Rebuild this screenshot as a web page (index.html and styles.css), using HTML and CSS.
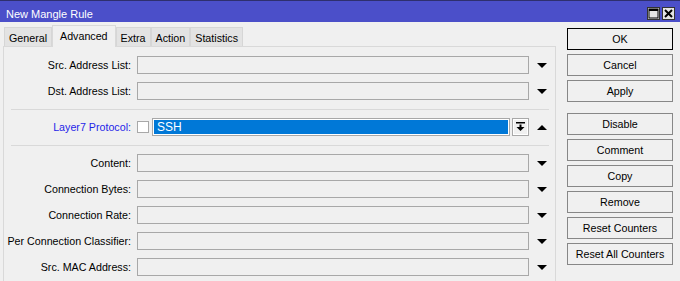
FILE: index.html
```html
<!DOCTYPE html>
<html lang="en">
<head>
	<meta charset="utf-8">
	<title>New Mangle Rule</title>
	<link rel="stylesheet" href="styles.css">
</head>
<body>
	<div class="window">
		<div class="titlebar">
			<span class="title">New Mangle Rule</span>
			<div class="wbtns">
				<span class="wbtn">
					<svg width="11" height="11" viewBox="0 0 11 11"><rect x="1" y="1" width="9" height="9" fill="none" stroke="#000" stroke-width="1"/><rect x="1" y="1" width="9" height="2" fill="#000"/></svg>
				</span>
				<span class="wbtn">
					<svg width="11" height="11" viewBox="0 0 11 11"><path d="M2 2 L9 9 M9 2 L2 9" stroke="#000" stroke-width="2"/></svg>
				</span>
			</div>
		</div>
		<div class="body">
			<div class="left">
				<div class="tabs">
					<span class="tab">General</span>
					<span class="tab active">Advanced</span>
					<span class="tab">Extra</span>
					<span class="tab">Action</span>
					<span class="tab">Statistics</span>
				</div>
				<div class="panel">
					<div class="field">
						<label>Src. Address List:</label>
						<div class="input"></div>
						<span class="arrow"><span class="tri down"></span></span>
					</div>
					<div class="field">
						<label>Dst. Address List:</label>
						<div class="input"></div>
						<span class="arrow"><span class="tri down"></span></span>
					</div>
					<div class="sep"></div>
					<div class="field">
						<label class="blue">Layer7 Protocol:</label>
						<span class="check"></span>
						<div class="select">SSH</div>
						<span class="dd">
							<svg width="9" height="10" viewBox="0 0 9 10"><rect x="0" y="0" width="9" height="1.5" fill="#000"/><rect x="3.5" y="2.5" width="2" height="3" fill="#000"/><path d="M0.5 5 L8.5 5 L4.5 9 Z" fill="#000"/></svg>
						</span>
						<span class="arrow"><span class="tri up"></span></span>
					</div>
					<div class="sep"></div>
					<div class="field">
						<label>Content:</label>
						<div class="input"></div>
						<span class="arrow"><span class="tri down"></span></span>
					</div>
					<div class="field">
						<label>Connection Bytes:</label>
						<div class="input"></div>
						<span class="arrow"><span class="tri down"></span></span>
					</div>
					<div class="field">
						<label>Connection Rate:</label>
						<div class="input"></div>
						<span class="arrow"><span class="tri down"></span></span>
					</div>
					<div class="field">
						<label>Per Connection Classifier:</label>
						<div class="input"></div>
						<span class="arrow"><span class="tri down"></span></span>
					</div>
					<div class="field">
						<label>Src. MAC Address:</label>
						<div class="input"></div>
						<span class="arrow"><span class="tri down"></span></span>
					</div>
				</div>
			</div>
			<div class="buttons">
				<div class="btn default">OK</div>
				<div class="btn">Cancel</div>
				<div class="btn">Apply</div>
				<div class="btn gap">Disable</div>
				<div class="btn">Comment</div>
				<div class="btn">Copy</div>
				<div class="btn">Remove</div>
				<div class="btn">Reset Counters</div>
				<div class="btn">Reset All Counters</div>
			</div>
		</div>
	</div>
</body>
</html>
```

FILE: styles.css
```css
body {
	margin: 0;
	background: #f0f0f0;
	font-family: "Liberation Sans", Arial, sans-serif;
	font-size: 10.7px;
	color: #000;
	overflow: hidden;
}
.window {
	width: 680px;
	height: 281px;
	overflow: hidden;
}
.titlebar {
	border-top: 1px solid #2e2f6e;
	background: #4b4fc9;
	color: #fff;
	display: flex;
	align-items: flex-end;
	justify-content: space-between;
	padding: 0 5px 1px 6px;
	box-sizing: border-box;
	height: 22px;
}
.title {
	font-size: 11px;
	line-height: 13px;
}
.wbtns {
	display: flex;
	gap: 2px;
	margin-bottom: 1px;
}
.wbtn {
	width: 13px;
	height: 13px;
	box-sizing: border-box;
	border: 1px solid #333;
	background: #e4e4e4;
	display: flex;
	align-items: center;
	justify-content: center;
}
.body {
	display: flex;
	padding-left: 3px;
}
.left {
	width: 553px;
}
.tabs {
	display: flex;
	align-items: flex-end;
	height: 24px;
	padding-left: 1px;
	position: relative;
	z-index: 1;
}
.tab {
	border: 1px solid #d6d6d6;
	border-bottom: none;
	background: #e3e3e3;
	padding: 2px 4px 0;
	line-height: 16px;
}
.tab.active {
	background: #f0f0f0;
	border-color: #d9d9d9;
	padding: 2px 7px 3px;
	margin-bottom: -1px;
}
.panel {
	border: 1px solid #d9d9d9;
	background: #f0f0f0;
	padding-top: 9px;
	height: 260px;
	box-sizing: border-box;
}
.field {
	display: flex;
	align-items: center;
	height: 18px;
	margin-bottom: 8px;
}
.field label {
	width: 127px;
	margin-right: 6px;
	text-align: right;
	white-space: nowrap;
}
.field label.blue {
	color: #1f1fe8;
}
.input {
	width: 392px;
	height: 18px;
	box-sizing: border-box;
	border: 1px solid #a8a8a8;
}
.arrow {
	width: 25px;
	display: flex;
	justify-content: center;
}
.tri {
	width: 0;
	height: 0;
	border-left: 5px solid transparent;
	border-right: 5px solid transparent;
}
.tri.down {
	border-top: 5px solid #000;
}
.tri.up {
	border-bottom: 5px solid #000;
}
.sep {
	height: 1px;
	background: #d9d9d9;
	margin: 9px 6px 8px 7px;
}
.check {
	width: 12px;
	height: 12px;
	box-sizing: border-box;
	border: 1px solid #a8a8a8;
	background: #fff;
	margin-right: 3px;
}
.select {
	width: 358px;
	height: 18px;
	box-sizing: border-box;
	border: 1px solid #a8a8a8;
	box-shadow: inset 0 0 0 1px #fff;
	background: #0078d7;
	color: #fff;
	font-size: 12px;
	line-height: 16px;
	padding-left: 4px;
}
.dd {
	width: 17px;
	height: 18px;
	box-sizing: border-box;
	margin-left: 2px;
	border: 1px solid #a8a8a8;
	box-shadow: inset 0 0 0 1px #fff;
	display: flex;
	align-items: center;
	justify-content: center;
}
.buttons {
	margin-left: 11px;
	width: 106px;
	padding-top: 6px;
}
.btn {
	height: 22px;
	box-sizing: border-box;
	border: 1px solid #878787;
	margin-bottom: 4px;
	text-align: center;
	line-height: 20px;
	background: #f0f0f0;
}
.btn.default {
	border-color: #000;
}
.btn.gap {
	margin-top: 11px;
}
```
